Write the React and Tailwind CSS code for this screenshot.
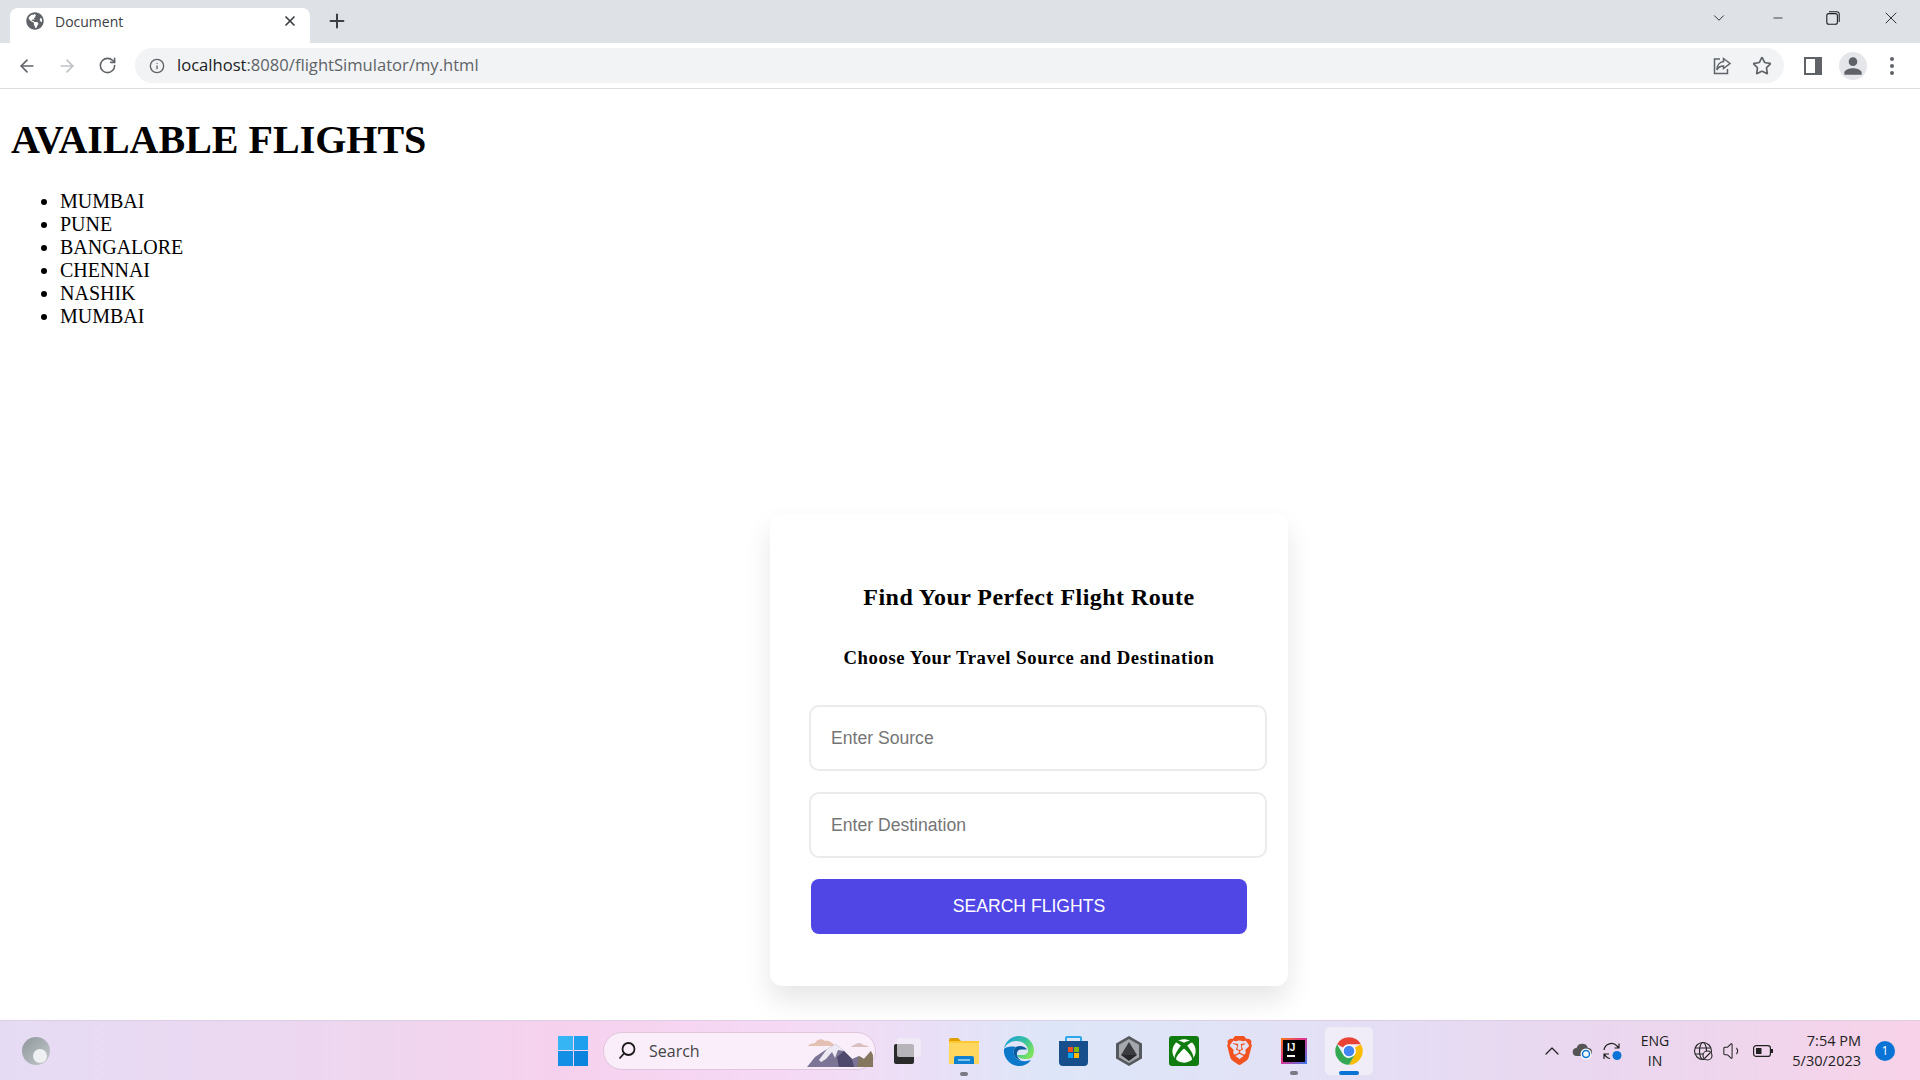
import React from "react";
import { ArrowLeft, ArrowRight, RotateCw, Info, Star, X, Plus, ChevronDown, ChevronUp, Minus, Volume1 } from "lucide-react";
import { FaGlobeAmericas } from "react-icons/fa";
import { MdPerson } from "react-icons/md";
import { SiBrave } from "react-icons/si";
import { FaXbox } from "react-icons/fa";

const cities = ["MUMBAI", "PUNE", "BANGALORE", "CHENNAI", "NASHIK", "MUMBAI"];

function Tab() {
  return (
    <div className="relative ml-[10px] mt-[8px] flex h-[35px] w-[300px] items-center rounded-t-[8px] bg-white pb-[9px] pl-[16px] pr-[12px]">
      <FaGlobeAmericas size={18} className="text-[#5f6368]" />
      <span className="ml-[11px] flex-1 font-['Open_Sans'] text-[14px] text-[#3c4043]">Document</span>
      <X size={16} strokeWidth={2.6} className="text-[#3c4043]" />
    </div>
  );
}

function WindowControls() {
  return (
    <div className="ml-auto flex h-[35px] items-center text-[#202124]">
      <ChevronDown size={18} strokeWidth={1.2} className="mr-[43px]" />
      <Minus size={14} strokeWidth={1.4} className="mr-[41px]" />
      <svg width="14" height="14" viewBox="0 0 14 14" fill="none" stroke="currentColor" strokeWidth="1.1" className="mr-[41px]">
        <rect x="0.8" y="2.6" width="10.6" height="10.6" rx="2" />
        <path d="M3 .8h8a2.2 2.2 0 0 1 2.2 2.2v8" />
      </svg>
      <X size={20} strokeWidth={1.1} className="mr-[19px]" />
    </div>
  );
}

function Toolbar() {
  return (
    <div className="flex h-[46px] items-center border-b border-[#dadce0] bg-white">
      <ArrowLeft size={20} strokeWidth={2} className="ml-[17px] text-[#5f6368]" />
      <ArrowRight size={20} strokeWidth={2} className="ml-[20px] text-[#bdc1c6]" />
      <RotateCw size={19} strokeWidth={2} className="ml-[21px] text-[#5f6368]" />
      <div className="ml-[18px] flex h-[35px] w-[1649px] items-center rounded-full bg-[#f1f3f4]">
        <Info size={16} strokeWidth={2} className="ml-[14px] text-[#5f6368]" />
        <span className="ml-[12px] font-['Open_Sans'] text-[16.6px] text-[#5f6368]">
          <span className="text-[#202124]">localhost</span>:8080/flightSimulator/my.html
        </span>
        <svg width="20" height="20" viewBox="0 0 20 20" fill="none" stroke="#5f6368" strokeWidth="1.5" className="ml-auto mr-[20px]">
          <path d="M8 3H2.5v14.5h13V13" />
          <path d="M11.5 2.5 18 7.5l-6.5 5V10C8 10 6 11.5 5 14c0-4.500 2.500-8 6.500-8.500z" />
        </svg>
        <Star size={20} strokeWidth={2} className="mr-[12px] text-[#5f6368]" />
      </div>
      <svg width="18" height="18" viewBox="0 0 18 18" className="ml-[20px]">
        <rect width="18" height="18" fill="#5f6368" />
        <rect x="2" y="2" width="9" height="14" fill="#fff" />
      </svg>
      <div className="ml-[17px] flex h-[28px] w-[28px] items-center justify-center rounded-full bg-[#e4e6ea]">
        <MdPerson size={26} className="text-[#5f6368]" />
      </div>
      <div className="ml-[23px] flex flex-col gap-[3px]">
        <span className="h-[4px] w-[4px] rounded-full bg-[#5f6368]" />
        <span className="h-[4px] w-[4px] rounded-full bg-[#5f6368]" />
        <span className="h-[4px] w-[4px] rounded-full bg-[#5f6368]" />
      </div>
    </div>
  );
}

function SearchCard() {
  return (
    <div className="ml-[770px] mt-[186px] box-border h-[472px] w-[518px] rounded-[12px] bg-white px-[41px] pt-[69px] text-center shadow-[0_14px_28px_rgba(0,0,0,0.1)]">
      <h2 className="text-[24px] font-bold leading-[28px] tracking-[0.47px] text-black">Find Your Perfect Flight Route</h2>
      <h3 className="mt-[36px] text-[18.72px] font-bold leading-[22px] tracking-[0.57px] text-black">Choose Your Travel Source and Destination</h3>
      <div className="mt-[36px] flex flex-col gap-[21px] font-['Liberation_Sans']">
        <input placeholder="Enter Source" className="-ml-[2px] box-border h-[66px] w-[458px] rounded-[10px] border-2 border-[#ebebeb] px-[20px] text-[17.6px] outline-none placeholder:text-[#757575]" />
        <input placeholder="Enter Destination" className="-ml-[2px] box-border h-[66px] w-[458px] rounded-[10px] border-2 border-[#ebebeb] px-[20px] text-[17.6px] outline-none placeholder:text-[#757575]" />
        <button type="button" className="h-[55px] w-[436px] rounded-[8px] bg-[#4f46e5] text-[17.6px] text-white">SEARCH FLIGHTS</button>
      </div>
    </div>
  );
}

function ChromeLogo() {
  return (
    <svg width="30" height="30" viewBox="0 0 48 48">
      <path d="M24 2a22 22 0 0 1 19.050 11H24a11 11 0 0 0-9.530 5.500L4.950 13A22 22 0 0 1 24 2z" fill="#ea4335" />
      <path d="M43.050 13A22 22 0 0 1 24 46l9.530-16.500A11 11 0 0 0 33.530 18.500z" fill="#fbbc04" />
      <path d="M24 46A22 22 0 0 1 4.950 13l9.520 16.500A11 11 0 0 0 24 35l9.530-5.500z" fill="#34a853" />
      <circle cx="24" cy="24" r="10.500" fill="#fff" />
      <circle cx="24" cy="24" r="8.500" fill="#4285f4" />
    </svg>
  );
}

function EdgeLogo() {
  return (
    <svg width="30" height="30" viewBox="0 0 30 30">
      <defs>
        <linearGradient id="edgeTop" x1="0" y1="0" x2="1" y2="0.6">
          <stop offset="0" stopColor="#1b9de2" />
          <stop offset="0.6" stopColor="#35c1a0" />
          <stop offset="1" stopColor="#7be35e" />
        </linearGradient>
      </defs>
      <path d="M15 0C7 0 1 6 0 13c2-5 7-8 12-8 6 0 11 3 12 9 .5 3-2 5-5 5h-6c1 3 5 4 9 4 2 0 4-.5 6-1.500 1.500-2.500 2-5 2-7C30 6 23 0 15 0z" fill="url(#edgeTop)" />
      <path d="M0 13C-1 23 7 30 15 30c5 0 9-2 12-6-5 2-11 1.500-15-2-3-3-3.500-8 0-11-6-1-10 0-12 2z" fill="#0c78c9" />
      <path d="M12 11c-3.500 3-3 8 0 11 1.500 1.300 3 2 5 2.500-3-2-4.500-5-4-7.500.2-2 2-3.500 4-3.500h6c-2-3-7-4.500-11-2.500z" fill="#0a5aa0" />
    </svg>
  );
}

function Explorer() {
  return (
    <svg width="30" height="26" viewBox="0 0 30 26">
      <path d="M0 2a2 2 0 0 1 2-2h7l3 3h-12z" fill="#e0a100" />
      <rect y="3" width="30" height="23" fill="#fcc934" />
      <rect y="5" width="30" height="21" fill="#ffd75e" />
      <path d="M5 26v-6a2 2 0 0 1 2-2h16a2 2 0 0 1 2 2v6z" fill="#0f7fd0" />
      <rect x="9" y="21" width="12" height="2" fill="#7cc3ee" />
    </svg>
  );
}

function Store() {
  return (
    <svg width="29" height="30" viewBox="0 0 29 30">
      <path d="M7 6V2a1 1 0 0 1 1-1h13a1 1 0 0 1 1 1v4" fill="none" stroke="#2fa8e8" strokeWidth="2" />
      <path d="M0 5h29v21a4 4 0 0 1-4 4H4a4 4 0 0 1-4-4z" fill="#174f8c" />
      <rect x="9" y="11" width="5" height="5" fill="#f25022" />
      <rect x="15" y="11" width="5" height="5" fill="#7fba00" />
      <rect x="9" y="17" width="5" height="5" fill="#00a4ef" />
      <rect x="15" y="17" width="5" height="5" fill="#ffb900" />
    </svg>
  );
}

function DarkHex() {
  return (
    <svg width="26" height="30" viewBox="0 0 26 30">
      <path d="M13 0l13 7.500v15L13 30 0 22.500v-15z" fill="#55585c" />
      <path d="M13 3l10 5.800v12.400L13 27 3 21.200V8.800z" fill="#a5a8ac" />
      <path d="M13 6l8 13H5z" fill="#3a3c40" />
      <path d="M5 19h16l-8 6z" fill="#26282b" />
    </svg>
  );
}

function Idea() {
  return (
    <div className="flex h-[26px] w-[26px] bg-[linear-gradient(135deg,#f97a12,#e0318e_45%,#3a7cf0)] p-[2px]">
      <div className="flex flex-1 flex-col bg-black pl-[4px] pt-[2px]">
        <span className="font-['Liberation_Sans'] text-[10px] font-bold leading-[12px] text-white">IJ</span>
        <span className="mt-[1px] h-[2px] w-[8px] bg-white" />
      </div>
    </div>
  );
}

function Mountain() {
  return (
    <svg width="66" height="32" viewBox="0 0 66 32" className="mr-[2px]">
      <path d="M1 11c2-3 5-2 7-3 2-4 7-5 10-2 3-1 7 1 10 5z" fill="#e3c0b2" />
      <path d="M44 12c1-2 4-2 5-3 3-2 6-1 7 1 3 0 5 1 6 2z" fill="#d9bfc0" />
      <path d="M0 32 8 22l12-8 9-5 8 7 8 8 7-3 5 3 7-8v16z" fill="#7c7596" />
      <path d="M20 14l9-5 8 7-6-1-3 8-3-6-6 7-5 3-2-2z" fill="#eeeaf3" />
      <path d="M37 16l8 8 2 8H32l-2-10z" fill="#4f4a6d" />
      <path d="M52 21l5 3 7-8 2 4v12H50z" fill="#857660" />
    </svg>
  );
}

function Taskbar() {
  return (
    <div className="flex h-[60px] items-center border-t border-[#dccfe4] bg-[linear-gradient(90deg,#e5dcf4_0%,#efd6ef_20%,#f6d1ee_29%,#f5daf5_42%,#dde6f8_55%,#e3e1f6_68%,#e8d8f0_80%,#eed6ed_90%,#f8d2e8_100%)]">
      <div className="ml-[22px] h-[28px] w-[28px] rounded-full bg-[linear-gradient(135deg,#8f979c,#c3c8cb)] p-[8px]">
        <div className="ml-[3px] mt-[4px] h-[14px] w-[14px] rounded-full bg-[#eef0f1]" />
      </div>
      <div className="ml-[508px] grid h-[30px] w-[30px] grid-cols-2 grid-rows-2 gap-[1px]">
        <span className="bg-[#35b5f3]" />
        <span className="bg-[#1ea0ee]" />
        <span className="bg-[#1390e6]" />
        <span className="bg-[#0b84de]" />
      </div>
      <div className="ml-[15px] flex h-[38px] w-[273px] items-center rounded-full border border-[#dfc6dc] bg-[#fbeefb]">
        <svg width="20" height="20" viewBox="0 0 20 20" fill="none" stroke="#1b1b1b" strokeWidth="1.800" className="ml-[13px]">
          <circle cx="11.500" cy="8" r="6" />
          <path d="M7 12.500 2.500 17.500" />
        </svg>
        <span className="ml-[12px] flex-1 font-['Open_Sans'] text-[16px] text-[#444]">Search</span>
        <Mountain />
      </div>
      <div className="relative ml-[18px] h-[26px] w-[33px]">
        <div className="absolute bottom-0 left-0 h-[20px] w-[20px] rounded-[2px] bg-[#2a2a2a]" />
        <div className="absolute left-[3px] top-[0px] h-[19px] w-[24px] rounded-[2px] bg-[#f2eef7]/70" />
      </div>
      <div className="relative ml-[22px] flex w-[30px] justify-center">
        <Explorer />
        <span className="absolute -bottom-[12px] h-[4px] w-[8px] rounded-full bg-[#7a7a85]" />
      </div>
      <div className="ml-[25px]"><EdgeLogo /></div>
      <div className="ml-[25px]"><Store /></div>
      <div className="ml-[28px]"><DarkHex /></div>
      <div className="ml-[27px] flex h-[30px] w-[30px] items-center justify-center rounded-[3px] bg-[#107c10]">
        <FaXbox size={24} className="text-white" />
      </div>
      <div className="ml-[26px]"><SiBrave size={29} className="text-[#f2521f]" /></div>
      <div className="relative ml-[27px] flex w-[26px] justify-center">
        <Idea />
        <span className="absolute -bottom-[11px] h-[4px] w-[8px] rounded-full bg-[#7a7a85]" />
      </div>
      <div className="relative ml-[18px] flex h-[48px] w-[48px] items-center justify-center rounded-[5px] bg-[#f0ecf8]">
        <ChromeLogo />
        <span className="absolute bottom-0 h-[4px] w-[20px] rounded-full bg-[#0a74d6]" />
      </div>
      <ChevronUp size={24} strokeWidth={1.2} className="ml-[167px] text-[#202020]" />
      <svg width="20" height="18" viewBox="0 0 20 18" className="ml-[8px]">
        <path d="M5 14a4 4 0 0 1-.5-8A6 6 0 0 1 16 6a4 4 0 0 1 0 8z" fill="#555" />
        <circle cx="14" cy="12" r="5.500" fill="#fff" />
        <circle cx="14" cy="12" r="3.500" fill="none" stroke="#0a74d6" strokeWidth="1.500" />
      </svg>
      <svg width="20" height="20" viewBox="0 0 20 20" fill="none" stroke="#222" strokeWidth="1.200" className="ml-[10px]">
        <path d="M2 9a7.500 7.500 0 0 1 13-4l2 2M17 2.500V7h-4.500" />
        <path d="M8 17.500A7 7 0 0 1 2.500 13M2 18v-5h5" />
        <circle cx="15" cy="14.500" r="4.500" fill="#0a74d6" stroke="none" />
      </svg>
      <div className="ml-[18px] w-[30px] text-center font-['Open_Sans'] text-[14px] leading-[20px] text-[#222]">ENG<br />IN</div>
      <svg width="20" height="20" viewBox="0 0 20 20" fill="none" stroke="#222" strokeWidth="1.100" className="ml-[23px]">
        <circle cx="10" cy="10" r="8.500" />
        <ellipse cx="10" cy="10" rx="3.500" ry="8.500" />
        <path d="M2 7h16M2 13h10" />
        <circle cx="14.500" cy="14.500" r="4.500" fill="#f0d9ef" />
        <path d="M11.500 17.500l6-6" />
      </svg>
      <Volume1 size={22} strokeWidth={1.1} className="ml-[9px] text-[#222]" />
      <svg width="20" height="12" viewBox="0 0 20 12" className="ml-[9px]">
        <rect x="0.600" y="0.600" width="16.800" height="10.800" rx="2.500" fill="none" stroke="#222" strokeWidth="1.200" />
        <rect x="3" y="3" width="5.500" height="6" fill="#222" />
        <rect x="18" y="4" width="2" height="4" fill="#222" />
      </svg>
      <div className="ml-[18px] w-[70px] whitespace-nowrap text-right font-['Open_Sans'] text-[14.5px] leading-[20px] text-[#222]">7:54 PM<br />5/30/2023</div>
      <div className="ml-[14px] flex h-[20px] w-[20px] items-center justify-center rounded-full bg-[#0a74d6] font-['Open_Sans'] text-[12px] text-white">1</div>
    </div>
  );
}

export default function App() {
  return (
    <div className="flex h-screen flex-col overflow-hidden bg-white font-['Liberation_Serif',serif] text-black">
      <div className="relative flex h-[43px] bg-[#dee1e6]">
        <Tab />
        <Plus size={22} strokeWidth={2.200} className="ml-[16px] mt-[10px] text-[#3c4043]" />
        <WindowControls />
      </div>
      <Toolbar />
      <main className="flex-1">
        <h1 className="ml-[11px] mt-[28px] text-[40px] font-bold leading-[46px]">AVAILABLE FLIGHTS</h1>
        <ul className="ml-[60px] mt-[27px] list-disc text-[20px] leading-[23px]">
          {cities.map((c, i) => (
            <li key={i}>{c}</li>
          ))}
        </ul>
        <SearchCard />
      </main>
      <Taskbar />
    </div>
  );
}
